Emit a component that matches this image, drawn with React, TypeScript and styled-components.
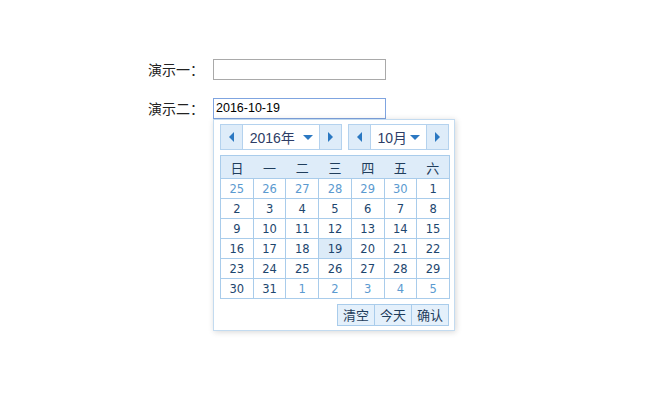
import React from 'react';
import styled, { createGlobalStyle } from 'styled-components';

const GlobalStyle = createGlobalStyle`
	html, body {
		margin: 0;
		padding: 0;
		background: #fff;
		min-height: 400px;
	}
	body {
		font-family: 'Noto Sans CJK SC', 'Liberation Sans', sans-serif;
	}
`;

const Page = styled.div`
	display: flex;
	flex-direction: column;
	row-gap: 18px;
	padding: 59px 0 0 148px;
`;

const Row = styled.div`
	display: flex;
	align-items: flex-start;
`;

const Label = styled.span`
	width: 65px;
	font-size: 14px;
	line-height: 21px;
	color: #222;
	font-family: 'Noto Sans CJK SC', sans-serif;
`;

const Field = styled.div`
	display: flex;
	flex-direction: column;
`;

const Input = styled.div<{ $focused?: boolean }>`
	box-sizing: border-box;
	width: 173px;
	height: 21px;
	border: 1px solid ${(p) => (p.$focused ? '#7fa4e0' : '#a9a9a9')};
	padding: 0 2px;
	font-family: 'Liberation Sans', Arial, sans-serif;
	font-size: 12.5px;
	line-height: 19px;
	color: #000;
`;

const Popup = styled.div`
	box-sizing: border-box;
	width: 242px;
	height: 212px;
	padding: 4px 5px 0 6px;
	background: #fff;
	border: 1px solid #c3dbf0;
	box-shadow: 1px 1px 6px rgba(0, 0, 0, 0.16);
	color: #1f4a72;
`;

const Selectors = styled.div`
	display: flex;
	column-gap: 6px;
`;

const Selector = styled.div<{ $width: number }>`
	box-sizing: border-box;
	display: flex;
	width: ${(p) => p.$width}px;
	height: 26px;
	border: 1px solid #b4d2ee;
`;

const ArrowButton = styled.div<{ $side: 'left' | 'right' }>`
	display: flex;
	align-items: center;
	justify-content: center;
	width: 21px;
	background: #deecf9;
	border-left: ${(p) => (p.$side === 'right' ? '1px solid #b4d2ee' : 'none')};
	border-right: ${(p) => (p.$side === 'left' ? '1px solid #b4d2ee' : 'none')};
`;

const arrowShapes = {
	left: 'border-width: 5px 5px 5px 0; border-color: transparent #2b78c2 transparent transparent;',
	right: 'border-width: 5px 0 5px 5px; border-color: transparent transparent transparent #2b78c2;',
	down: 'border-width: 5px 5px 0 5px; border-color: #2b78c2 transparent transparent transparent;',
};

const Arrow = styled.span<{ $dir: 'left' | 'right' | 'down' }>`
	display: block;
	width: 0;
	height: 0;
	border-style: solid;
	${(p) => arrowShapes[p.$dir]}
`;

const SelectorValue = styled.div<{ $gap: number }>`
	flex: 1;
	display: flex;
	align-items: center;
	justify-content: center;
	column-gap: ${(p) => p.$gap}px;
	font-size: 14px;
	color: #2d3d66;
	font-family: 'Liberation Sans', 'Noto Sans CJK SC', sans-serif;
	background: #fff;
`;

const Table = styled.table`
	margin-top: 5px;
	width: 230px;
	border-collapse: collapse;
	table-layout: fixed;
	border: 1px solid #a9cceb;
`;

const HeadCell = styled.th`
	height: 22px;
	padding: 0;
	font-weight: normal;
	font-size: 13px;
	color: #1f3d5c;
	background: #deecf9;
	font-family: 'Noto Sans CJK SC', sans-serif;
	text-align: center;
`;

const DayCell = styled.td<{ $other?: boolean; $selected?: boolean }>`
	height: 19px;
	padding: 0;
	border: 1px solid #a9cceb;
	text-align: center;
	font-family: 'DejaVu Sans', 'Liberation Sans', sans-serif;
	font-size: 11.5px;
	color: ${(p) => (p.$other ? '#5b9ad0' : '#1d466e')};
	background: ${(p) => (p.$selected ? '#dcebf8' : '#fff')};
`;

const Footer = styled.div`
	display: flex;
	justify-content: flex-end;
	margin-top: 5px;
`;

const Buttons = styled.div`
	display: flex;
	border: 1px solid #a9cceb;
`;

const Button = styled.div`
	width: 36px;
	height: 20px;
	line-height: 20px;
	text-align: center;
	font-size: 13px;
	color: #1f3d5c;
	background: #e4f0fb;
	font-family: 'Noto Sans CJK SC', sans-serif;
	& + & {
		border-left: 1px solid #a9cceb;
	}
`;

const weekDays = ['日', '一', '二', '三', '四', '五', '六'];

type Day = { n: number; other?: boolean };

const buildDays = (): Day[] => {
	const days: Day[] = [];
	for (let d = 25; d <= 30; d++) days.push({ n: d, other: true });
	for (let d = 1; d <= 31; d++) days.push({ n: d });
	for (let d = 1; days.length < 42; d++) days.push({ n: d, other: true });
	return days;
};

const Calendar = function () {
	const days = buildDays();
	const weeks: Day[][] = [];
	for (let i = 0; i < days.length; i += 7) weeks.push(days.slice(i, i + 7));

	return (
		<Popup>
			<Selectors>
				<Selector $width={123}>
					<ArrowButton $side="left">
						<Arrow $dir="left" />
					</ArrowButton>
					<SelectorValue $gap={8}>
						<span>2016年</span>
						<Arrow $dir="down" />
					</SelectorValue>
					<ArrowButton $side="right">
						<Arrow $dir="right" />
					</ArrowButton>
				</Selector>
				<Selector $width={101}>
					<ArrowButton $side="left">
						<Arrow $dir="left" />
					</ArrowButton>
					<SelectorValue $gap={3}>
						<span>10月</span>
						<Arrow $dir="down" />
					</SelectorValue>
					<ArrowButton $side="right">
						<Arrow $dir="right" />
					</ArrowButton>
				</Selector>
			</Selectors>
			<Table>
				<thead>
					<tr>
						{weekDays.map((w) => (
							<HeadCell key={w}>{w}</HeadCell>
						))}
					</tr>
				</thead>
				<tbody>
					{weeks.map((week, i) => (
						<tr key={i}>
							{week.map((day, j) => (
								<DayCell
									key={j}
									$other={day.other}
									$selected={!day.other && day.n === 19}
								>
									{day.n}
								</DayCell>
							))}
						</tr>
					))}
				</tbody>
			</Table>
			<Footer>
				<Buttons>
					<Button>清空</Button>
					<Button>今天</Button>
					<Button>确认</Button>
				</Buttons>
			</Footer>
		</Popup>
	);
};

const App = function () {
	return (
		<>
			<GlobalStyle />
			<Page>
				<Row>
					<Label>演示一：</Label>
					<Field>
						<Input />
					</Field>
				</Row>
				<Row>
					<Label>演示二：</Label>
					<Field>
						<Input $focused>2016-10-19</Input>
						<Calendar />
					</Field>
				</Row>
			</Page>
		</>
	);
};

export default App;
